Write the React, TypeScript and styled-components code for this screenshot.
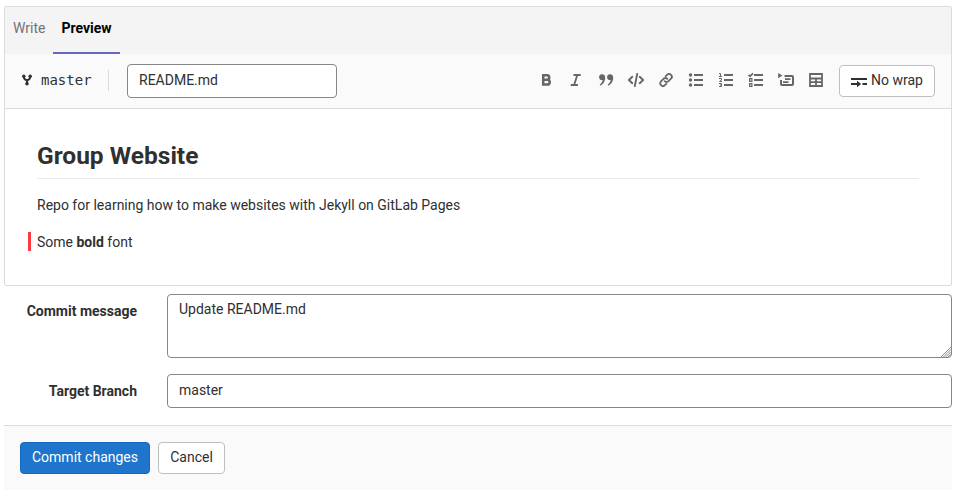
import React from "react";
import styled, { createGlobalStyle, css } from "styled-components";

const GlobalStyle = createGlobalStyle`
  *, *::before, *::after { box-sizing: border-box; }
  body {
    margin: 0;
    background: #fff;
    color: #303030;
    font: 14px/20px Roboto, "Noto Sans", sans-serif;
  }
`;

const Page = styled.main`
  padding: 6px 6px 12px 4px;
`;

const Editor = styled.section`
  height: 280px;
  border: 1px solid #dbdbdb;
  border-radius: 2px;
`;

const Tabs = styled.nav`
  display: flex;
  height: 47px;
  background: #f4f4f4;
`;

const Tab = styled.button<{ $active?: boolean }>`
  padding: 0 8px 4px;
  border: 0;
  border-bottom: 2px solid ${(p) => (p.$active ? "#6666c4" : "transparent")};
  background: none;
  color: ${(p) => (p.$active ? "#000" : "#737278")};
  font: ${(p) => (p.$active ? 700 : 400)} 14px/20px Roboto, sans-serif;
`;

const Toolbar = styled.div`
  display: flex;
  align-items: center;
  height: 55px;
  padding: 0 16px 1px;
  background: #fafafa;
  border-bottom: 1px solid #dbdbdb;
`;

const Branch = styled.div`
  display: flex;
  align-items: center;
  gap: 4px;
  width: 88px;
  height: 21px;
  padding-bottom: 2px;
  border-right: 1px solid #dbdbdb;
  font: 14px/20px "DejaVu Sans Mono", monospace;
`;

const fieldStyle = css`
  display: block;
  padding: 6px 11px 8px;
  border: 1px solid #868686;
  border-radius: 4px;
  background: #fff;
  color: #303030;
  font: 14px/16px Roboto, sans-serif;
  outline: none;
`;

const Field = styled.input<{ $width: string }>`
  ${fieldStyle}
  width: ${(p) => p.$width};
  height: 34px;
`;

const FileName = styled.div`
  margin-left: 18px;
`;

const Tools = styled.div`
  display: flex;
  gap: 14px;
  margin-left: auto;
  padding-bottom: 2px;
  color: #666;
`;

const Glyph = styled.svg`
  display: block;
  flex: none;
  width: 16px;
  height: 16px;
  fill: none;
  stroke: currentColor;
  stroke-width: 2;
  overflow: visible;
`;

const Button = styled.button<{ $primary?: boolean; $width: number }>`
  display: flex;
  align-items: center;
  justify-content: center;
  gap: 4px;
  width: ${(p) => p.$width}px;
  height: 32px;
  padding: 0 0 2px;
  border: 1px solid ${(p) => (p.$primary ? "#1068bf" : "#bfbfbf")};
  border-radius: 4px;
  background: ${(p) => (p.$primary ? "#1f75cb" : "#fff")};
  color: ${(p) => (p.$primary ? "#fff" : "#303030")};
  font: 14px/20px Roboto, sans-serif;
  white-space: nowrap;
`;

const WrapSlot = styled.div`
  margin-left: 15px;
  padding-top: 1px;
`;

const Preview = styled.article`
  padding: 31px 32px;
`;

const Title = styled.h1`
  height: 39px;
  margin: 0 0 16px;
  border-bottom: 1px solid #eaeaea;
  font-size: 24.5px;
  line-height: 31px;
  font-weight: 700;
`;

const Paragraph = styled.p`
  margin: 0 0 16px;
  line-height: 21px;
`;

const Changed = styled(Paragraph)`
  margin: 0 0 0 -9px;
  height: 19px;
  padding-left: 6px;
  border-left: 3px solid #fc3a40;
  line-height: 21px;
`;

const FormRow = styled.div`
  display: grid;
  grid-template-columns: 133px 785px;
  column-gap: 30px;
`;

const CommitRow = styled(FormRow)`
  margin-top: 8px;
`;

const BranchRow = styled(FormRow)`
  margin-top: 16px;
`;

const Label = styled.label`
  padding-top: 7px;
  text-align: right;
  font-weight: 700;
`;

const MessageBox = styled.div`
  position: relative;
`;

const Message = styled.textarea`
  ${fieldStyle}
  width: 785px;
  height: 64px;
  resize: none;
`;

const Grip = styled.svg`
  position: absolute;
  right: 1px;
  bottom: 1px;
  width: 10px;
  height: 10px;
  fill: none;
  stroke: #707070;
  stroke-width: 0.9;
  pointer-events: none;
`;

const Actions = styled.footer`
  display: flex;
  gap: 8px;
  height: 65px;
  margin-top: 17px;
  padding: 16px;
  border-top: 1px solid #dbdbdb;
  background: #fafafa;
`;

const ListBars = () => <path d="M6 3h9M6 8h9M6 13h9" />;

const toolIcons: { name: string; art: React.ReactNode }[] = [
  {
    name: "Bold",
    art: <path d="M5.2 3.3H9a2.2 2.2 0 0 1 0 4.4H5.2zm0 4.5h4.1a2.4 2.4 0 0 1 0 4.8H5.2z" strokeWidth="2.5" />,
  },
  {
    name: "Italic",
    art: <path d="M5.5 3h7.2M2.7 13h7.2M9.3 3l-3.2 10" strokeWidth="1.8" />,
  },
  {
    name: "Quote",
    art: (
      <path
        d="M4.3 2.2a3 3 0 0 0-3.2 3c0 1.7 1.2 2.9 2.8 2.9h.7c-.2 1.9-1 3.2-2.7 4.3v1.4c3.2-1.2 5.3-4.2 5.3-8.2 0-2-1.1-3.4-2.9-3.4zm8 0a3 3 0 0 0-3.2 3c0 1.7 1.2 2.9 2.8 2.9h.7c-.2 1.9-1 3.2-2.7 4.3v1.4c3.2-1.2 5.3-4.2 5.3-8.2 0-2-1.1-3.4-2.9-3.4z"
        fill="currentColor"
        stroke="none"
      />
    ),
  },
  {
    name: "Code",
    art: <path d="M4.3 4.8.9 8l3.4 3.2M11.7 4.8 15.1 8l-3.4 3.2M9.2 1.9 6.8 14.1" strokeWidth="1.9" strokeLinecap="round" />,
  },
  {
    name: "Link",
    art: (
      <path
        d="m7.7 4.2 1.4-1.4a2.75 2.75 0 0 1 3.9 3.9L10.5 9.2a2.65 2.65 0 0 1-3.8 0M8.3 11.8l-1.4 1.4A2.75 2.75 0 0 1 3 9.3l2.5-2.5a2.65 2.65 0 0 1 3.8 0"
        strokeWidth="1.8"
        strokeLinecap="round"
      />
    ),
  },
  {
    name: "Bullet list",
    art: (
      <>
        <ListBars />
        <g fill="currentColor" stroke="none">
          <circle cx="2.5" cy="3" r="1.7" />
          <circle cx="2.5" cy="8" r="1.7" />
          <circle cx="2.5" cy="13" r="1.7" />
        </g>
      </>
    ),
  },
  {
    name: "Numbered list",
    art: (
      <>
        <ListBars />
        <path d="M1 1.5h1.5v3M1 4.5h3M1 6.5h2.5v1.4L1.5 9.5H4M1 11.5h2.5v3H1M2 13h1.5" strokeWidth="1" />
      </>
    ),
  },
  {
    name: "Task list",
    art: (
      <>
        <ListBars />
        <path d="m.6 2.8 1.5 1.5L5 1.4" strokeWidth="1.8" />
        <path d="M1.6 6.6h2.3v2.8H1.6zM1.6 11.6h2.3v2.8H1.6z" strokeWidth="1.2" />
      </>
    ),
  },
  {
    name: "Collapsible section",
    art: (
      <>
        <path d="M.2 1v5.2L4.5 3.6z" fill="currentColor" stroke="none" />
        <path d="M6.5 4H14a1 1 0 0 1 1 1v7a1 1 0 0 1-1 1H4a1 1 0 0 1-1-1V8" />
        <path d="M7 7.2h5.5M5 10.2h5.5" strokeWidth="1.8" />
      </>
    ),
  },
  {
    name: "Table",
    art: <path d="M2 2h12v12H2zM2 6.5h12M2 10.2h12M8 6.5V14" strokeWidth="1.8" />,
  },
];

export default function App() {
  return (
    <>
      <GlobalStyle />
      <Page>
        <Editor>
          <Tabs>
            <Tab>Write</Tab>
            <Tab $active>Preview</Tab>
          </Tabs>
          <Toolbar>
            <Branch>
              <Glyph viewBox="0 0 16 16">
                <path d="M2.8 4.2c0 3 1.2 3.8 3.2 3.8s3.2-.8 3.2-3.8M6 8v4" strokeWidth="2" />
                <g fill="currentColor" stroke="none">
                  <circle cx="2.8" cy="4.2" r="1.7" />
                  <circle cx="9.2" cy="4.2" r="1.7" />
                  <circle cx="6" cy="11.8" r="1.8" />
                </g>
              </Glyph>
              master
            </Branch>
            <FileName>
              <Field $width="210px" defaultValue="README.md" aria-label="File name" />
            </FileName>
            <Tools>
              {toolIcons.map(({ name, art }) => (
                <Glyph key={name} viewBox="0 0 16 16" role="img" aria-label={name}>
                  {art}
                </Glyph>
              ))}
            </Tools>
            <WrapSlot>
              <Button $width={96}>
                <Glyph viewBox="0 0 16 16">
                  <path d="M0 7h16M0 12h8M11.5 12H16" strokeWidth="2" />
                  <path d="M6 8.8v6.4l4.2-3.2z" fill="currentColor" stroke="none" />
                </Glyph>
                No wrap
              </Button>
            </WrapSlot>
          </Toolbar>
          <Preview>
            <Title>Group Website</Title>
            <Paragraph>Repo for learning how to make websites with Jekyll on GitLab Pages</Paragraph>
            <Changed>
              Some <b>bold</b> font
            </Changed>
          </Preview>
        </Editor>
        <CommitRow>
          <Label htmlFor="message">Commit message</Label>
          <MessageBox>
            <Message id="message" defaultValue="Update README.md" />
            <Grip viewBox="0 0 11 11">
              <path d="M0 11 11 0M2.6 11 11 2.6M5.2 11 11 5.2M7.8 11 11 7.8" />
            </Grip>
          </MessageBox>
        </CommitRow>
        <BranchRow>
          <Label htmlFor="branch">Target Branch</Label>
          <Field id="branch" $width="785px" defaultValue="master" />
        </BranchRow>
        <Actions>
          <Button $primary $width={130}>Commit changes</Button>
          <Button $width={67}>Cancel</Button>
        </Actions>
      </Page>
    </>
  );
}
